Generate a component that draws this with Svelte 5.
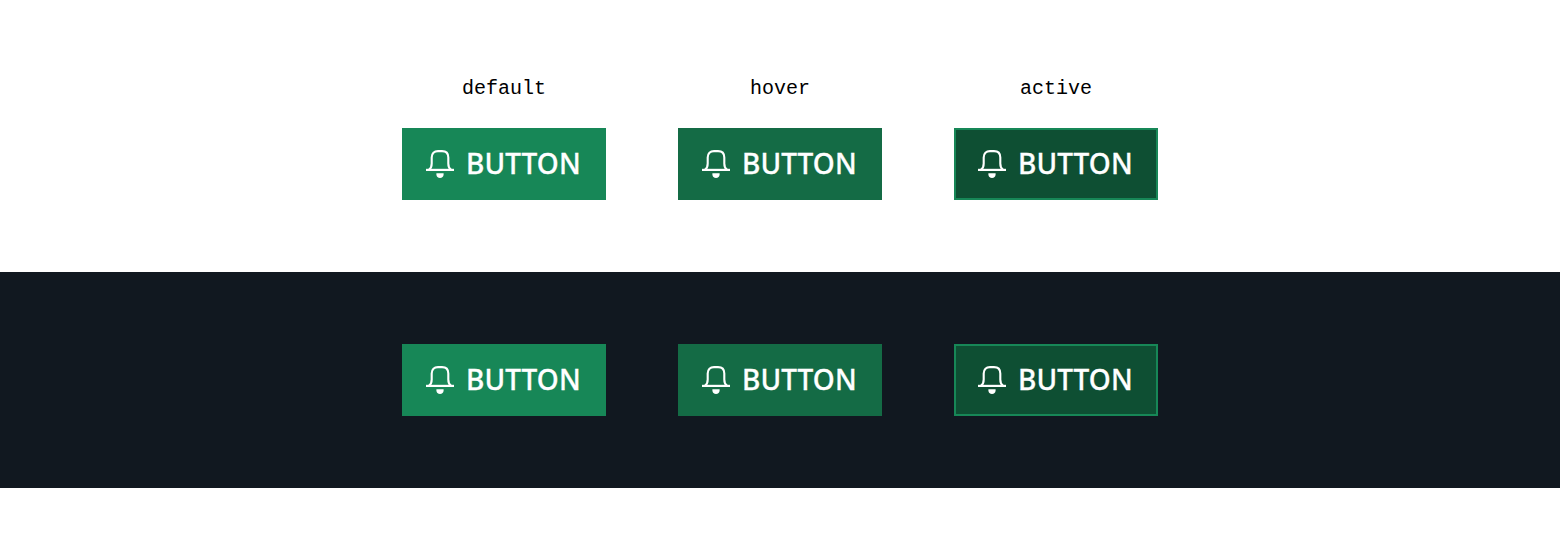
<script>
  const states = ['default', 'hover', 'active'];
</script>

{#snippet button(state)}
  <button class="btn {state}">
    <svg viewBox="0 0 28 28" width="28" height="28" fill="none" aria-hidden="true">
      <path d="M0 19.9H28" stroke="currentColor" stroke-width="2.2" />
      <path d="M3 19.7C4.9 18.5 5.7 16.8 5.7 13.5V7.5C5.7 3.5 8.2 1.1 12 1.1H16C19.8 1.1 22.3 3.5 22.3 7.5V13.5C22.3 16.8 23.1 18.5 25 19.7" stroke="currentColor" stroke-width="2.1" />
      <path d="M10.4 23.3H17.6V24.4C17.6 26.5 16.1 28 14 28S10.4 26.5 10.4 24.4Z" fill="currentColor" />
    </svg>
    <span>BUTTON</span>
  </button>
{/snippet}

<main>
  <section class="light">
    {#each states as state}
      <div class="sample">
        <div class="label">{state}</div>
        {@render button(state)}
      </div>
    {/each}
  </section>
  <section class="dark">
    {#each states as state}
      {@render button(state)}
    {/each}
  </section>
</main>

<style>
  :global(body) { background: #fff; }
  main { height: 560px; }
  section { display: flex; justify-content: center; gap: 72px; box-sizing: border-box; }
  .light { height: 272px; padding-top: 72px; }
  .dark { height: 216px; padding-top: 72px; background: #111820; }
  .label {
    height: 56px; line-height: 33px; text-align: center; color: #000;
    font-family: "Liberation Mono", monospace; font-size: 20px;
  }
  .btn {
    display: flex; align-items: center; gap: 12px; box-sizing: border-box;
    width: 204px; height: 72px; margin: 0; padding: 0 22px; border: 2px solid #178757;
    background: #178757; color: #fff; border-radius: 0;
    font: 500 28px/36px "Noto Sans", sans-serif; letter-spacing: 0.1px; white-space: nowrap;
    -webkit-text-stroke: 0.3px #fff;
  }
  .hover { background: #146b45; border-color: #146b45; }
  .active { background: #0e4f33; }
  svg { flex: none; }
  span { margin-bottom: 2px; }
</style>
